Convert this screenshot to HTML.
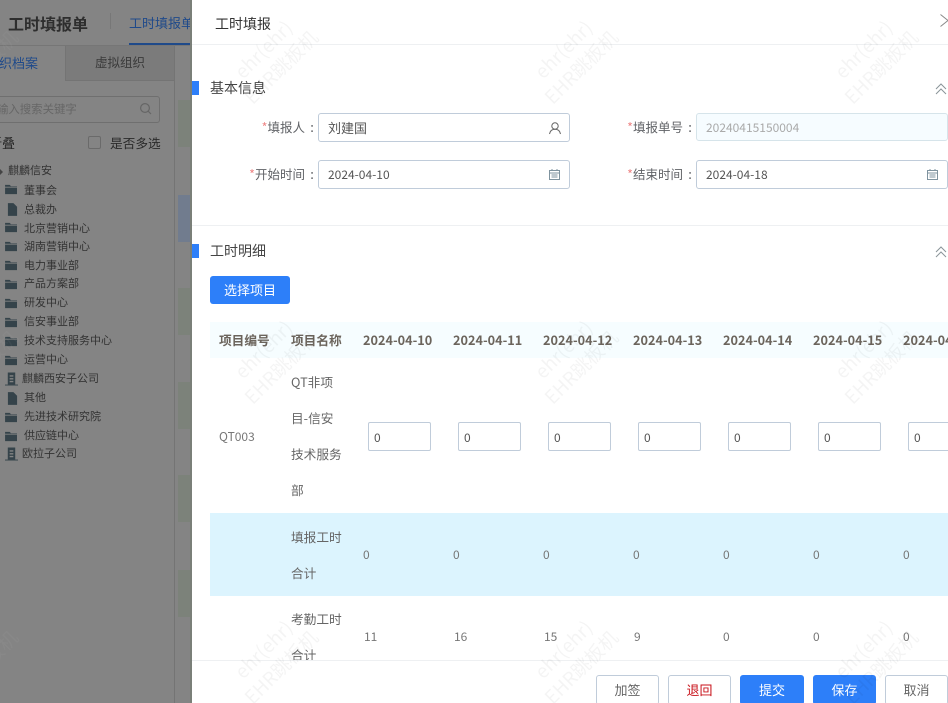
<!DOCTYPE html>
<html><head><meta charset="utf-8"><style>
*{box-sizing:border-box}
html,body{margin:0;padding:0;width:948px;height:703px;overflow:hidden;background:#fff}
body{font-family:"Noto Sans CJK SC","Liberation Sans",sans-serif;position:relative}
.a{position:absolute;white-space:nowrap}
#left{position:absolute;left:0;top:0;width:192px;height:703px;background:#848484;overflow:hidden}
.t{font-size:11px;color:#333;line-height:16px}
.wm{position:absolute;width:140px;height:50px;text-align:center;font-size:19px;line-height:25px;color:rgba(0,0,0,.045);transform:rotate(-45deg);white-space:nowrap;pointer-events:none}
.wmd{color:rgba(255,255,255,.04)}
.lab{position:absolute;font-size:12.5px;color:#606266;line-height:20px;white-space:nowrap;text-align:right;width:90px}
.lab i{font-style:normal;color:#e88;}
.col{position:absolute;font-size:13px;color:#606266;line-height:20px;width:6px;text-align:center}
.inp{position:absolute;height:29px;width:252px;border:1px solid #c0ccda;border-radius:3px;font-size:12px;color:#555;line-height:27px;padding-left:9px;background:transparent}
.th{position:absolute;top:331px;font-size:12.7px;font-weight:700;color:#6b645c;line-height:18px;white-space:nowrap}
.td{position:absolute;font-size:12px;color:#777;line-height:18px;white-space:nowrap}
.nm{position:absolute;left:291px;font-size:12.7px;color:#666;line-height:18px;white-space:nowrap}
.cell{position:absolute;top:422px;width:63px;height:29px;border:1px solid #c0ccda;border-radius:2px;font-size:12px;color:#555;line-height:29px;padding-left:5px;background:#fff}
.btn{position:absolute;top:675px;height:30px;border:1px solid #c0ccda;border-radius:3px;font-size:13px;color:#666;text-align:center;line-height:28px;background:#fff}
.bl{background:#2d7ff9;border-color:#2d7ff9;color:#fff}
</style></head><body>
<div id="left">
<div class="a" style="left:8px;top:11px;font-size:16px;font-weight:700;color:#2e2e2e;line-height:24px">工时填报单</div>
<div class="a" style="left:110px;top:13px;width:1px;height:16px;background:#777"></div>
<div class="a" style="left:129px;top:13px;font-size:13px;color:#1f4a8a;line-height:20px">工时填报单</div>
<div class="a" style="left:129px;top:43px;width:63px;height:2px;background:#1f4a8a"></div>
<div class="a" style="left:0;top:45px;width:192px;height:1px;background:#767676"></div>
<div class="a" style="left:65px;top:46px;width:110px;height:35px;background:#7b7b7b;border-left:1px solid #747474;border-bottom:1px solid #747474"></div>
<div class="a" style="left:-1px;top:54px;font-size:13px;color:#1f4a8a;line-height:18px">织档案</div>
<div class="a" style="left:95px;top:53px;font-size:12.5px;color:#3a3a3a;line-height:18px">虚拟组织</div>
<div class="a" style="left:174px;top:46px;width:1px;height:657px;background:#747474"></div>
<div class="a" style="left:-5px;top:96px;width:165px;height:27px;border:1px solid #6f6f6f;border-radius:3px"></div>
<div class="a" style="left:-3px;top:101px;font-size:11.4px;color:#666;line-height:17px">输入搜索关键字</div>
<svg class="a" style="left:139px;top:102px" width="14" height="14" viewBox="0 0 14 14" fill="none" stroke="#666" stroke-width="1.2"><circle cx="6" cy="6" r="4.4"/><path d="M9.3 9.3L12 12"/></svg>
<div class="a" style="left:-11px;top:134px;font-size:13px;color:#2a2a2a;line-height:18px">折叠</div>
<div class="a" style="left:88px;top:136px;width:13px;height:13px;border:1px solid #6a6a6a;border-radius:2px"></div>
<div class="a" style="left:110px;top:134px;font-size:12.7px;color:#2a2a2a;line-height:18px">是否多选</div>
<div class="a" style="left:0;top:169px;border-left:3px solid #444;border-top:3px solid transparent;border-bottom:3px solid transparent"></div>
<div class="a t" style="left:8px;top:162px">麒麟信安</div>

<svg width="0" height="0" style="position:absolute"><defs>
<symbol id="fo" viewBox="0 0 14 12"><path d="M0 1h5l1.500 1.500H13V3H0zM0 4h13v7H0z" fill="#35434a"/></symbol>
<symbol id="fi" viewBox="0 0 12 14"><path d="M1 0h6l4 4v10H1z" fill="#35434a"/></symbol>
<symbol id="bd" viewBox="0 0 14 14"><path d="M3 0h8v13H3zM5 3v1.500h4V3zM5 6v1.500h4V6zM5 9v1.500h4V9z" fill="#35434a" fill-rule="evenodd"/><path d="M0 13h14v1H0z" fill="#35434a"/></symbol>
</defs></svg>

<svg class="a" style="left:5px;top:184px" width="13" height="11"><use href="#fo"/></svg><div class="a t" style="left:24px;top:182px">董事会</div>
<svg class="a" style="left:7px;top:203px" width="11" height="13"><use href="#fi"/></svg><div class="a t" style="left:24px;top:201px">总裁办</div>
<svg class="a" style="left:5px;top:222px" width="13" height="11"><use href="#fo"/></svg><div class="a t" style="left:24px;top:220px">北京营销中心</div>
<svg class="a" style="left:5px;top:241px" width="13" height="11"><use href="#fo"/></svg><div class="a t" style="left:24px;top:238px">湖南营销中心</div>
<svg class="a" style="left:5px;top:260px" width="13" height="11"><use href="#fo"/></svg><div class="a t" style="left:24px;top:257px">电力事业部</div>
<svg class="a" style="left:5px;top:279px" width="13" height="11"><use href="#fo"/></svg><div class="a t" style="left:24px;top:275px">产品方案部</div>
<svg class="a" style="left:5px;top:298px" width="13" height="11"><use href="#fo"/></svg><div class="a t" style="left:24px;top:294px">研发中心</div>
<svg class="a" style="left:5px;top:317px" width="13" height="11"><use href="#fo"/></svg><div class="a t" style="left:24px;top:313px">信安事业部</div>
<svg class="a" style="left:5px;top:336px" width="13" height="11"><use href="#fo"/></svg><div class="a t" style="left:24px;top:332px">技术支持服务中心</div>
<svg class="a" style="left:5px;top:355px" width="13" height="11"><use href="#fo"/></svg><div class="a t" style="left:24px;top:351px">运营中心</div>
<svg class="a" style="left:5px;top:372px" width="13" height="14"><use href="#bd"/></svg><div class="a t" style="left:22px;top:370px">麒麟西安子公司</div>
<svg class="a" style="left:7px;top:392px" width="11" height="13"><use href="#fi"/></svg><div class="a t" style="left:24px;top:389px">其他</div>
<svg class="a" style="left:5px;top:412px" width="13" height="11"><use href="#fo"/></svg><div class="a t" style="left:24px;top:408px">先进技术研究院</div>
<svg class="a" style="left:5px;top:431px" width="13" height="11"><use href="#fo"/></svg><div class="a t" style="left:24px;top:427px">供应链中心</div>
<svg class="a" style="left:5px;top:447px" width="13" height="14"><use href="#bd"/></svg><div class="a t" style="left:22px;top:445px">欧拉子公司</div>

<div class="a" style="left:178px;top:100px;width:12px;height:47px;background:#7c827a"></div>
<div class="a" style="left:178px;top:195px;width:14px;height:47px;background:#717c8e"></div>
<div class="a" style="left:178px;top:288px;width:12px;height:47px;background:#7c827a"></div>
<div class="a" style="left:178px;top:382px;width:12px;height:47px;background:#7c827a"></div>
<div class="a" style="left:178px;top:475px;width:12px;height:47px;background:#7c827a"></div>
<div class="a" style="left:178px;top:570px;width:12px;height:47px;background:#7c827a"></div>
<div class="a" style="left:190px;top:0;width:2px;height:703px;background:#7a7f78"></div>
<div class="wm wmd" style="left:-98px;top:33px">ehr(ehr)<br>EHR跳板机</div>
<div class="wm wmd" style="left:-98px;top:333px">ehr(ehr)<br>EHR跳板机</div>
<div class="wm wmd" style="left:-98px;top:633px">ehr(ehr)<br>EHR跳板机</div>
</div>

<!-- panel -->
<div class="a" style="left:215px;top:14px;font-size:14px;color:#333;line-height:20px">工时填报</div>
<svg class="a" style="left:940px;top:14px" width="8" height="13" fill="none" stroke="#888" stroke-width="1"><path d="M.5 .5L8 6.500L.5 12.500"/></svg>
<div class="a" style="left:192px;top:44px;width:756px;height:1px;background:#eef0f2"></div>

<div class="a" style="left:192px;top:81px;width:7px;height:14px;background:#2d7ff9"></div>
<div class="a" style="left:210px;top:78px;font-size:14px;color:#444;line-height:20px">基本信息</div>
<svg class="a" style="left:935px;top:83px" width="12" height="12" fill="none" stroke="#8a9499" stroke-width="1"><path d="M1 6l5-5 5 5M1 11l5-5 5 5"/></svg>

<div class="lab" style="left:215px;top:117px"><i>*</i>填报人</div><div class="col" style="left:309px;top:117px">:</div>
<div class="inp" style="left:318px;top:113px;font-size:13px;color:#555">刘建国</div>
<svg class="a" style="left:548px;top:121px" width="14" height="14" fill="none" stroke="#666" stroke-width="1"><circle cx="7" cy="5" r="3.2"/><path d="M1.500 13c.5-3 2.500-4.800 5.500-4.800s5 1.800 5.500 4.800"/></svg>
<div class="lab" style="left:593px;top:117px"><i>*</i>填报单号</div><div class="col" style="left:687px;top:117px">:</div>
<div class="inp" style="left:696px;top:113px;height:28px;background:#f6fcff;border-color:#d6e4ea;color:#aaa">20240415150004</div>

<div class="lab" style="left:215px;top:164px"><i>*</i>开始时间</div><div class="col" style="left:309px;top:164px">:</div>
<div class="inp" style="left:318px;top:160px">2024-04-10</div>
<svg class="a" style="left:549px;top:169px" width="11" height="11" fill="none" stroke="#7f939f" stroke-width="1"><rect x=".5" y="1.500" width="10" height="9" /><path d="M.5 4h10M3 0v2M8 0v2M2.500 6h6M2.500 8h6" /></svg>
<div class="lab" style="left:593px;top:164px"><i>*</i>结束时间</div><div class="col" style="left:687px;top:164px">:</div>
<div class="inp" style="left:696px;top:160px">2024-04-18</div>
<svg class="a" style="left:927px;top:169px" width="11" height="11" fill="none" stroke="#7f939f" stroke-width="1"><rect x=".5" y="1.500" width="10" height="9" /><path d="M.5 4h10M3 0v2M8 0v2M2.500 6h6M2.500 8h6" /></svg>

<div class="a" style="left:192px;top:225px;width:756px;height:1px;background:#eef0f2"></div>
<div class="a" style="left:192px;top:244px;width:7px;height:14px;background:#2d7ff9"></div>
<div class="a" style="left:210px;top:241px;font-size:14px;color:#444;line-height:20px">工时明细</div>
<svg class="a" style="left:935px;top:246px" width="12" height="12" fill="none" stroke="#8a9499" stroke-width="1"><path d="M1 6l5-5 5 5M1 11l5-5 5 5"/></svg>
<div class="a" style="left:210px;top:276px;width:80px;height:28px;background:#2d7ff9;border-radius:3px;color:#fff;font-size:13px;text-align:center;line-height:28px">选择项目</div>

<div class="a" style="left:210px;top:322px;width:738px;height:36px;background:#f6fdff"></div>
<div class="th" style="left:219px">项目编号</div>
<div class="th" style="left:291px">项目名称</div>
<div class="th" style="left:363px">2024-04-10</div>
<div class="th" style="left:453px">2024-04-11</div>
<div class="th" style="left:543px">2024-04-12</div>
<div class="th" style="left:633px">2024-04-13</div>
<div class="th" style="left:723px">2024-04-14</div>
<div class="th" style="left:813px">2024-04-15</div>
<div class="th" style="left:903px">2024-04-16</div>

<div class="td" style="left:219px;top:428px">QT003</div>
<div class="nm" style="top:373px">QT非项</div>
<div class="nm" style="top:409px">目-信安</div>
<div class="nm" style="top:445px">技术服务</div>
<div class="nm" style="top:481px">部</div>
<div class="cell" style="left:368px">0</div>
<div class="cell" style="left:458px">0</div>
<div class="cell" style="left:548px">0</div>
<div class="cell" style="left:638px">0</div>
<div class="cell" style="left:728px">0</div>
<div class="cell" style="left:818px">0</div>
<div class="cell" style="left:908px">0</div>

<div class="a" style="left:210px;top:513px;width:738px;height:83px;background:#dcf4fe"></div>
<div class="nm" style="top:528px">填报工时</div>
<div class="nm" style="top:564px">合计</div>
<div class="td" style="left:363px;top:546px">0</div>
<div class="td" style="left:453px;top:546px">0</div>
<div class="td" style="left:543px;top:546px">0</div>
<div class="td" style="left:633px;top:546px">0</div>
<div class="td" style="left:723px;top:546px">0</div>
<div class="td" style="left:813px;top:546px">0</div>
<div class="td" style="left:903px;top:546px">0</div>

<div class="nm" style="top:610px">考勤工时</div>
<div class="nm" style="top:646px">合计</div>
<div class="td" style="left:364px;top:628px">11</div>
<div class="td" style="left:454px;top:628px">16</div>
<div class="td" style="left:544px;top:628px">15</div>
<div class="td" style="left:634px;top:628px">9</div>
<div class="td" style="left:723px;top:628px">0</div>
<div class="td" style="left:813px;top:628px">0</div>
<div class="td" style="left:903px;top:628px">0</div>

<div class="a" style="left:192px;top:660px;width:756px;height:43px;background:#fff;border-top:1px solid #eef0f2"></div>
<div class="btn" style="left:596px;width:63px">加签</div>
<div class="btn" style="left:668px;width:63px;color:#c8121a">退回</div>
<div class="btn bl" style="left:740px;width:64px">提交</div>
<div class="btn bl" style="left:813px;width:63px">保存</div>
<div class="btn" style="left:885px;width:63px">取消</div>

<div class="wm" style="left:202px;top:33px">ehr(ehr)<br>EHR跳板机</div>
<div class="wm" style="left:502px;top:33px">ehr(ehr)<br>EHR跳板机</div>
<div class="wm" style="left:802px;top:33px">ehr(ehr)<br>EHR跳板机</div>
<div class="wm" style="left:202px;top:333px">ehr(ehr)<br>EHR跳板机</div>
<div class="wm" style="left:502px;top:333px">ehr(ehr)<br>EHR跳板机</div>
<div class="wm" style="left:802px;top:333px">ehr(ehr)<br>EHR跳板机</div>
<div class="wm" style="left:202px;top:633px">ehr(ehr)<br>EHR跳板机</div>
<div class="wm" style="left:502px;top:633px">ehr(ehr)<br>EHR跳板机</div>
<div class="wm" style="left:802px;top:633px">ehr(ehr)<br>EHR跳板机</div>
</body></html>
